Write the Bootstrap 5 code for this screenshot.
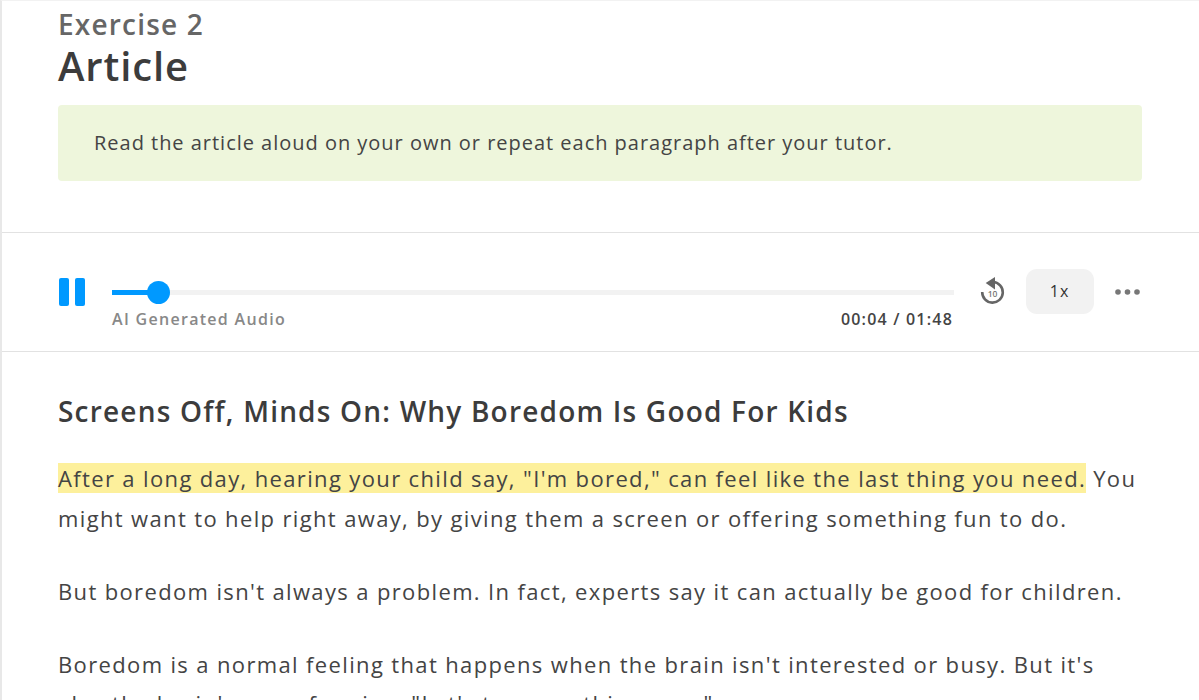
<!DOCTYPE html>
<html lang="en">
<head>
    <meta charset="UTF-8">
    <meta name="viewport" content="width=device-width, initial-scale=1.0">
    <title>Article</title>
    <link href="https://cdn.jsdelivr.net/npm/bootstrap@5.3.0/dist/css/bootstrap.min.css" rel="stylesheet">
    <script src="https://cdn.jsdelivr.net/npm/bootstrap@5.3.0/dist/js/bootstrap.bundle.min.js"></script>
    <style>
        html, body { height: 700px; overflow: hidden; }
        body { background: #fff; font-family: "Open Sans", sans-serif; color: #3c3c3c; }
        .lesson-page { border-left: 2px solid #e8e8e8; border-top: 1px solid #f2f2f2; height: 700px; overflow: hidden; }
        .lesson-head { padding: 6px 57px 0 56px; height: 232px; border-bottom: 1px solid #e2e2e2; }
        .ex-label { font-size: 28px; line-height: 34px; font-weight: 600; letter-spacing: 1.2px; color: #666; margin: 0 0 1px; }
        .ex-title { font-size: 40px; line-height: 48px; font-weight: 600; letter-spacing: .9px; color: #3c3c3c; margin: 0 0 15px; }
        .tip-box { background: #eef6dc; border-radius: 4px; height: 76px; padding: 0 36px; font-size: 20px; letter-spacing: .98px; color: #444; }
        .audio-bar { height: 119px; border-bottom: 1px solid #e2e2e2; padding: 0 57px 0 56px; }
        .pause-btn { width: 27px; height: 28px; }
        .track-wrap { width: 842px; margin-left: 27px; margin-top: 38px; }
        .track { height: 5px; background: #f2f2f2; margin-top: -2px; margin-bottom: 2px; }
        .track-fill { height: 5px; width: 46px; background: #0099ff; }
        .track-dot { width: 23px; height: 23px; border-radius: 50%; background: #0099ff; top: -9px; left: 35px; }
        .ai-note { font-size: 16px; font-weight: 600; letter-spacing: 1.3px; color: #888; }
        .time-note { font-size: 16px; font-weight: 600; letter-spacing: 1.2px; color: #444; margin-right: 1px; }
        .speed-btn { width: 68px; height: 45px; margin-bottom: 2px; margin-right: 2px; border-radius: 11px; background: #f2f2f2; font-size: 16px; letter-spacing: 1px; color: #333; }
        .more-dots { margin-right: 2px; }
        .art-body { padding: 41px 57px 0 56px; }
        .art-title { font-size: 28px; line-height: 36px; font-weight: 600; letter-spacing: 1.2px; color: #3c3c3c; margin-bottom: 30px; }
        .art-para { font-size: 22px; line-height: 39.5px; letter-spacing: 1.36px; color: #444; margin-bottom: 33.5px; }
        .hl { background: #fdf09c; }
    </style>
</head>
<body>
    <div class="lesson-page">
        <div class="lesson-head">
            <p class="ex-label">Exercise 2</p>
            <h1 class="ex-title">Article</h1>
            <div class="tip-box d-flex align-items-center">Read the article aloud on your own or repeat each paragraph after your tutor.</div>
        </div>

        <div class="audio-bar d-flex align-items-center">
            <svg class="pause-btn flex-shrink-0" viewBox="0 0 27 28">
                <rect x="1" y="0" width="10" height="28" rx="2" fill="#0099ff"/>
                <rect x="17" y="0" width="10" height="28" rx="2" fill="#0099ff"/>
            </svg>
            <div class="track-wrap flex-shrink-0">
                <div class="track position-relative">
                    <div class="track-fill"></div>
                    <div class="track-dot position-absolute"></div>
                </div>
                <div class="d-flex justify-content-between mt-2 pt-1">
                    <span class="ai-note">AI Generated Audio</span>
                    <span class="time-note">00:04 / 01:48</span>
                </div>
            </div>
            <svg class="ms-4 flex-shrink-0" width="28" height="30" viewBox="0 0 28 30">
                <path d="M15 5A10.3 10.3 0 1 1 4.200 15" fill="none" stroke="#666" stroke-width="2.6"/>
                <path d="M17 0v12.500L7.700 6z" fill="#666"/>
                <text x="14.500" y="20" text-anchor="middle" font-family="Open Sans" font-size="8.500" font-weight="600" fill="#777">10</text>
            </svg>
            <div class="speed-btn d-flex align-items-center justify-content-center ms-auto">1x</div>
            <svg class="more-dots ms-auto flex-shrink-0" width="25" height="6" viewBox="0 0 25 6">
                <circle cx="3" cy="3" r="2.8" fill="#777"/><circle cx="12.500" cy="3" r="2.8" fill="#777"/><circle cx="22" cy="3" r="2.8" fill="#777"/>
            </svg>
        </div>

        <div class="art-body">
            <h2 class="art-title">Screens Off, Minds On: Why Boredom Is Good For Kids</h2>
            <p class="art-para"><span class="hl">After a long day, hearing your child say, "I'm bored," can feel like the last thing you need.</span> You might want to help right away, by giving them a screen or offering something fun to do.</p>
            <p class="art-para">But boredom isn't always a problem. In fact, experts say it can actually be good for children.</p>
            <p class="art-para">Boredom is a normal feeling that happens when the brain isn't interested or busy. But it's also the brain's way of saying, "Let's try something new."</p>
        </div>
    </div>
</body>
</html>
